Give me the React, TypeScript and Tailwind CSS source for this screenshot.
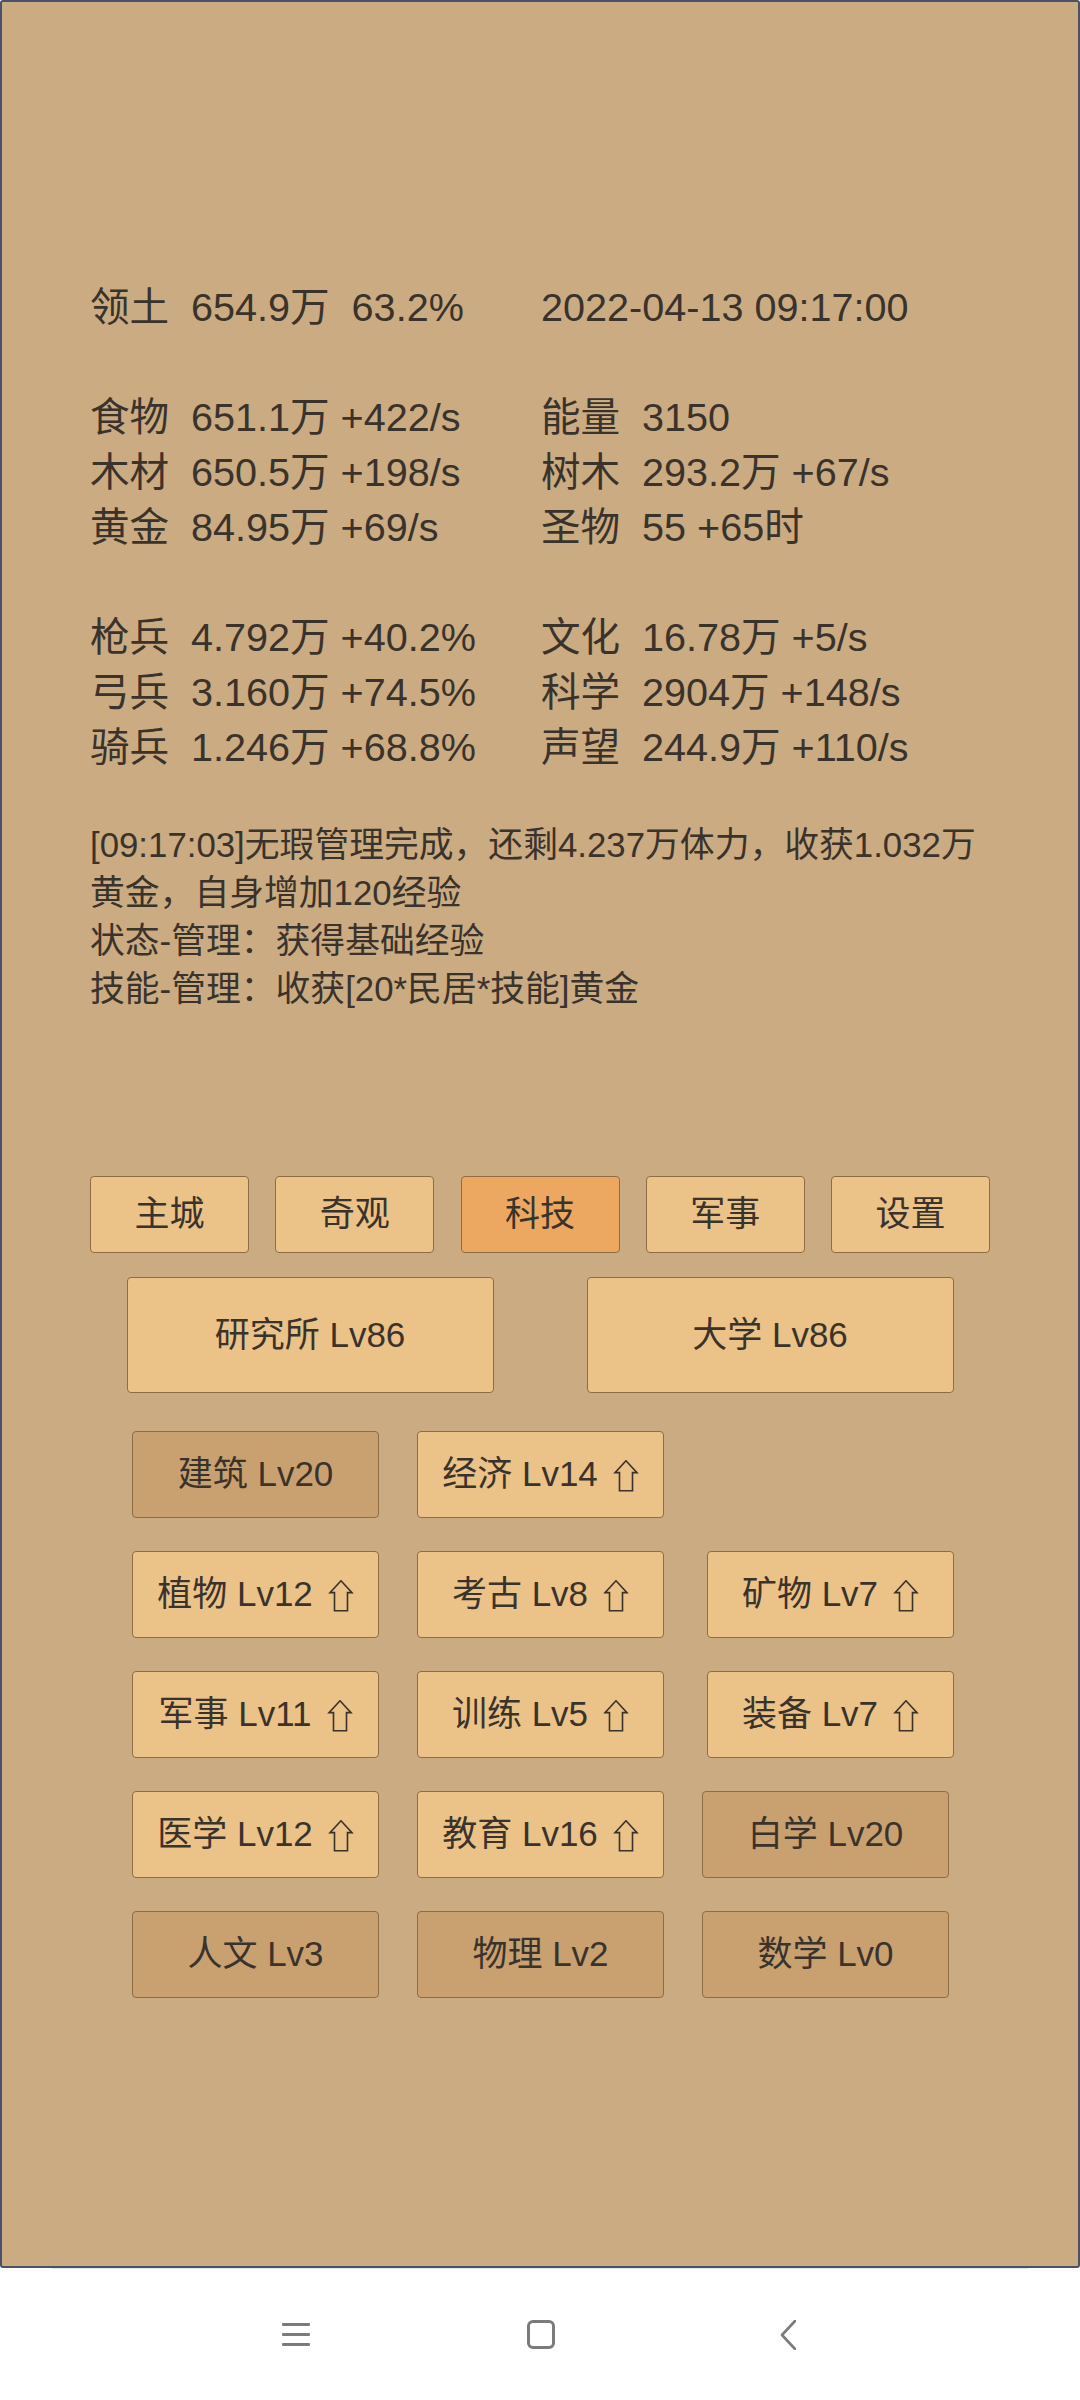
import React from 'react';

type Stat = { label: string; value: string };

const statRows: (null | [Stat, Stat])[] = [
  [
    { label: '领土', value: '654.9万  63.2%' },
    { label: '', value: '2022-04-13 09:17:00' },
  ],
  null,
  [
    { label: '食物', value: '651.1万 +422/s' },
    { label: '能量', value: '3150' },
  ],
  [
    { label: '木材', value: '650.5万 +198/s' },
    { label: '树木', value: '293.2万 +67/s' },
  ],
  [
    { label: '黄金', value: '84.95万 +69/s' },
    { label: '圣物', value: '55 +65时' },
  ],
  null,
  [
    { label: '枪兵', value: '4.792万 +40.2%' },
    { label: '文化', value: '16.78万 +5/s' },
  ],
  [
    { label: '弓兵', value: '3.160万 +74.5%' },
    { label: '科学', value: '2904万 +148/s' },
  ],
  [
    { label: '骑兵', value: '1.246万 +68.8%' },
    { label: '声望', value: '244.9万 +110/s' },
  ],
];

const tabs = ['主城', '奇观', '科技', '军事', '设置'];

type Tech = { name: string; up?: boolean; done?: boolean } | null;

const techRows: Tech[][] = [
  [{ name: '建筑 Lv20', done: true }, { name: '经济 Lv14', up: true }, null],
  [{ name: '植物 Lv12', up: true }, { name: '考古 Lv8', up: true }, { name: '矿物 Lv7', up: true }],
  [{ name: '军事 Lv11', up: true }, { name: '训练 Lv5', up: true }, { name: '装备 Lv7', up: true }],
  [{ name: '医学 Lv12', up: true }, { name: '教育 Lv16', up: true }, { name: '白学 Lv20', done: true }],
  [{ name: '人文 Lv3', done: true }, { name: '物理 Lv2', done: true }, { name: '数学 Lv0', done: true }],
];

function UpArrow() {
  return (
    <svg width="26" height="32" viewBox="0 0 26 32" className="ml-[15px] mt-[2px]">
      <path
        d="M13 0.8 L24 12.6 L19.5 12.6 L19.5 30.8 L6.5 30.8 L6.5 12.6 L2 12.6 Z"
        fill="none"
        stroke="#3a332c"
        strokeWidth="1.6"
        strokeLinejoin="miter"
      />
    </svg>
  );
}

export default function App() {
  return (
    <div
      className="w-[1080px] h-[2400px] bg-white flex flex-col text-[#3a332c]"
      style={{ fontFamily: '"Liberation Sans", "Noto Sans CJK SC", sans-serif' }}
    >
      {/* Game screen */}
      <div className="h-[2268px] bg-[#cbab82] border-2 border-[#4b5169] rounded-[3px] pt-[278px] pl-[88px]">
        {/* Stats */}
        <div className="text-[39.6px] leading-[55px] whitespace-pre">
          {statRows.map((row, i) =>
            row === null ? (
              <div key={i} className="h-[55px]" />
            ) : (
              <div key={i} className="flex">
                <div className="w-[451px] flex">
                  <span className="w-[101px] shrink-0">{row[0].label}</span>
                  <span>{row[0].value}</span>
                </div>
                <div className="flex">
                  {row[1].label && <span className="w-[101px] shrink-0">{row[1].label}</span>}
                  <span>{row[1].value}</span>
                </div>
              </div>
            )
          )}
        </div>

        {/* Log */}
        <div className="mt-[46px] w-[900px] text-[34.8px] leading-[48px]">
          <p>[09:17:03]无瑕管理完成，还剩4.237万体力，收获1.032万黄金，自身增加120经验</p>
          <p>状态-管理：获得基础经验</p>
          <p>技能-管理：收获[20*民居*技能]黄金</p>
        </div>

        {/* Tabs */}
        <div className="mt-[163px] w-[900px] flex justify-between">
          {tabs.map((t) => (
            <button
              key={t}
              className={`w-[159px] h-[77px] text-[35px] border border-[#8e6c46] rounded-[4px] flex items-center justify-center ${
                t === '科技' ? 'bg-[#eca861]' : 'bg-[#ebc287]'
              }`}
            >
              {t}
            </button>
          ))}
        </div>

        {/* Buildings */}
        <div className="mt-[24px] w-[900px] flex justify-center gap-[93px]">
          {['研究所 Lv86', '大学 Lv86'].map((b) => (
            <button
              key={b}
              className="w-[367px] h-[116px] text-[35px] bg-[#ebc287] border border-[#8e6c46] rounded-[4px] flex items-center justify-center"
            >
              {b}
            </button>
          ))}
        </div>

        {/* Tech grid */}
        <div className="mt-[38px] ml-[42px] grid grid-cols-[247px_247px_247px] gap-x-[38px] gap-y-[33px]">
          {techRows.flat().map((t, i) =>
            t === null ? (
              <div key={i} />
            ) : (
              <button
                key={i}
                className={`w-[247px] h-[87px] text-[35px] border border-[#8e6c46] rounded-[4px] flex items-center justify-center ${
                  t.done ? 'bg-[#c9a070]' : 'bg-[#ebc287]'
                } ${i % 3 === 2 && !t.done ? 'ml-[5px]' : ''}`}
              >
                <span>{t.name}</span>
                {t.up && <UpArrow />}
              </button>
            )
          )}
        </div>
      </div>

      <div className="mx-[52px] h-px bg-[#e4e7ec]" />

      {/* System nav bar */}
      <div className="h-[131px] flex items-center">
        <svg width="28" height="24" viewBox="0 0 28 24" className="ml-[282px]">
          <rect x="0" y="0" width="28" height="3" rx="1" fill="#7b7b7b" />
          <rect x="0" y="10" width="28" height="3" rx="1" fill="#7b7b7b" />
          <rect x="0" y="20" width="28" height="3" rx="1" fill="#7b7b7b" />
        </svg>
        <div className="ml-[217px] w-[28px] h-[29px] border-[3px] border-[#7b7b7b] rounded-[6px]" />
        <svg width="16" height="30" viewBox="0 0 16 30" className="ml-[225px]">
          <path d="M15 1 L2 15 L15 29" fill="none" stroke="#7b7b7b" strokeWidth="2.6" strokeLinecap="round" strokeLinejoin="round" />
        </svg>
      </div>
    </div>
  );
}
